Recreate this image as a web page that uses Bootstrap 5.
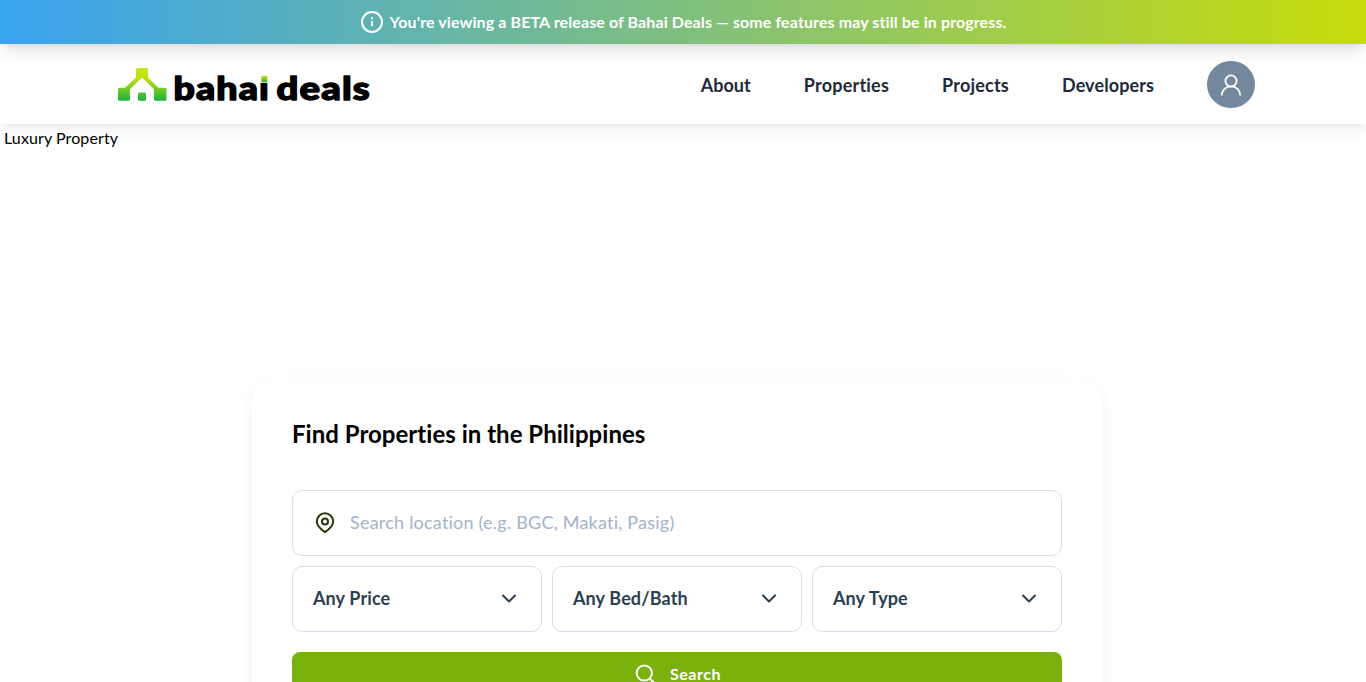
<!DOCTYPE html>
<html lang="en">
<head>
<meta charset="utf-8">
<meta name="viewport" content="width=device-width, initial-scale=1">
<title>Bahai Deals</title>
<link href="https://cdn.jsdelivr.net/npm/bootstrap@5.3.0/dist/css/bootstrap.min.css" rel="stylesheet">
<script src="https://cdn.jsdelivr.net/npm/bootstrap@5.3.0/dist/js/bootstrap.bundle.min.js" defer></script>
<style>
body{font-family:Lato,sans-serif;font-size:16px;line-height:24px;color:#000;background:#fff;height:682px;overflow:hidden;font-variant-ligatures:none}
.beta-bar{height:44px;z-index:3;background:linear-gradient(to right,#38a3f1,#c7dc0b);box-shadow:0 10px 15px -3px rgba(0,0,0,.1),0 4px 6px -4px rgba(0,0,0,.1);font-weight:700;gap:6px}
.beta-bar span{letter-spacing:.105px}
.site-nav{height:80px;z-index:2;padding:1px 111.500px 0 118px;background:#fff;box-shadow:0 10px 15px -3px rgba(0,0,0,.06),0 4px 6px -4px rgba(0,0,0,.1)}
.site-links{gap:53px}
.site-links a{font-size:18px;font-weight:700;color:#1e293b;text-decoration:none}
.ls-about{letter-spacing:.02px}.ls-prop{letter-spacing:.22px}.ls-proj{letter-spacing:.2px}.ls-dev{letter-spacing:.1px}
.avatar{width:47.500px;height:47.500px;background:#74889d}
.hero{height:254px;padding:2px 4px;letter-spacing:.1px}
.finder{width:850px;margin-left:252px;padding:40px;border-radius:24px;background:#fff;box-shadow:0 6px 16px rgba(0,0,0,.06)}
.finder h1{font-size:24px;line-height:32px;font-weight:700;margin:0 0 40px;letter-spacing:.02px}
.field{height:66px;border:1px solid #d3e0ea;border-radius:10px;font-size:18px}
.field span{padding-bottom:2px}
.place{padding-left:20px;gap:13px;color:#a3b3c9;letter-spacing:.22px}
.pick{padding:0 20px;color:#2c3e52;font-weight:700;letter-spacing:.12px}
.go{height:44px;margin-top:20px;border-radius:8px;background:#7bb10d;color:#fff;font-weight:700;letter-spacing:.5px;gap:15px;padding:0 0 0 2px}
.picks{gap:10px;margin-top:10px}
</style>
</head>
<body>
<div class="beta-bar position-relative d-flex align-items-center justify-content-center text-white text-nowrap">
  <svg width="24" height="24" viewBox="0 0 24 24" fill="none" stroke="#fff" stroke-width="2"><circle cx="12" cy="12" r="10"/><path d="M12 11v5M12 7.200v2"/></svg>
  <span>You're viewing a BETA release of Bahai Deals — some features may still be in progress.</span>
</div>
<nav class="site-nav position-relative d-flex align-items-center justify-content-between">
  <a href="#" aria-label="bahai deals">
    <svg class="d-block" width="260" height="45" viewBox="0 0 260 45">
      <defs>
        <linearGradient id="roof" gradientUnits="userSpaceOnUse" x1="0" y1="6" x2="0" y2="39"><stop offset="0" stop-color="#bfeb1c"/><stop offset=".35" stop-color="#bedd12"/><stop offset="1" stop-color="#19b13f"/></linearGradient>
        <linearGradient id="dot" x1="0" y1="0" x2="0" y2="1"><stop offset="0" stop-color="#d0dd10"/><stop offset="1" stop-color="#2db536"/></linearGradient>
      </defs>
      <path fill="url(#roof)" d="M19.500 6h9q1.500 0 1.500 1.500v8l10.500 10.300h6.500q1.500 0 1.500 1.500v10q0 1.500-1.500 1.500h-9.500q-1.500 0-1.500-1.500v-10L24.500 15.900h-1L12 27.300v10q0 1.500-1.500 1.500H1.500q-1.500 0-1.500-1.500v-10q0-1.500 1.500-1.500H7L18 15.500v-8q0-1.500 1.500-1.500z"/>
      <rect fill="url(#roof)" x="20" y="30.500" width="8" height="8.300" rx="1.500"/>
      <g font-family="Lato,sans-serif" font-weight="900" font-size="32" letter-spacing="1" stroke="#000" stroke-width="1.400" stroke-linejoin="round">
        <text x="55.500" y="38" textLength="96.500" lengthAdjust="spacingAndGlyphs">bahai</text>
        <text x="158.500" y="38" textLength="94.500" lengthAdjust="spacingAndGlyphs">deals</text>
      </g>
      <path fill="#fff" d="M139.500 10h13v10.800h-13z"/>
      <rect fill="url(#dot)" x="143.300" y="13.800" width="6" height="6.200" rx=".8"/>
    </svg>
  </a>
  <div class="site-links d-flex align-items-center">
    <a class="ls-about" href="#">About</a><a class="ls-prop" href="#">Properties</a><a class="ls-proj" href="#">Projects</a><a class="ls-dev" href="#">Developers</a>
    <div class="avatar rounded-circle d-flex align-items-center justify-content-center">
      <svg width="24" height="24" viewBox="0 0 24 24" fill="none" stroke="#fff" stroke-width="1.800"><circle cx="12" cy="8" r="5.600"/><path d="M2.800 22.500v-.5a9.200 8.600 0 0 1 18.400 0v.5"/></svg>
    </div>
  </div>
</nav>
<div class="hero">Luxury Property</div>
<section class="finder">
  <h1>Find Properties in the Philippines</h1>
  <div class="field place d-flex align-items-center">
    <svg width="24" height="24" viewBox="0 0 24 24" fill="none" stroke="#27380f" stroke-width="2" stroke-linejoin="round"><path d="M12 2.300a8.200 8.200 0 0 0-8.200 8.200c0 4.600 3.700 7.600 8.200 10.600 4.500-3 8.200-6 8.200-10.600A8.200 8.200 0 0 0 12 2.300z"/><circle cx="12" cy="10.500" r="3"/></svg>
    <span>Search location (e.g. BGC, Makati, Pasig)</span>
  </div>
  <div class="picks d-flex">
    <div class="field pick flex-fill w-100 d-flex align-items-center justify-content-between"><span>Any Price</span><svg width="24" height="24" viewBox="0 0 24 24" fill="none" stroke="#2c3e52" stroke-width="2" stroke-linecap="round" stroke-linejoin="round"><path d="m6 8.500 6 6 6-6"/></svg></div>
    <div class="field pick flex-fill w-100 d-flex align-items-center justify-content-between"><span>Any Bed/Bath</span><svg width="24" height="24" viewBox="0 0 24 24" fill="none" stroke="#2c3e52" stroke-width="2" stroke-linecap="round" stroke-linejoin="round"><path d="m6 8.500 6 6 6-6"/></svg></div>
    <div class="field pick flex-fill w-100 d-flex align-items-center justify-content-between"><span>Any Type</span><svg width="24" height="24" viewBox="0 0 24 24" fill="none" stroke="#2c3e52" stroke-width="2" stroke-linecap="round" stroke-linejoin="round"><path d="m6 8.500 6 6 6-6"/></svg></div>
  </div>
  <button class="go btn border-0 w-100 d-flex align-items-center justify-content-center" type="button">
    <svg width="20" height="20" viewBox="0 0 20 20" fill="none" stroke="#fff" stroke-width="2" stroke-linecap="round"><circle cx="9.300" cy="9" r="7.600"/><path d="m14.800 14.500 4 4"/></svg>
    <span>Search</span>
  </button>
</section>
</body>
</html>
